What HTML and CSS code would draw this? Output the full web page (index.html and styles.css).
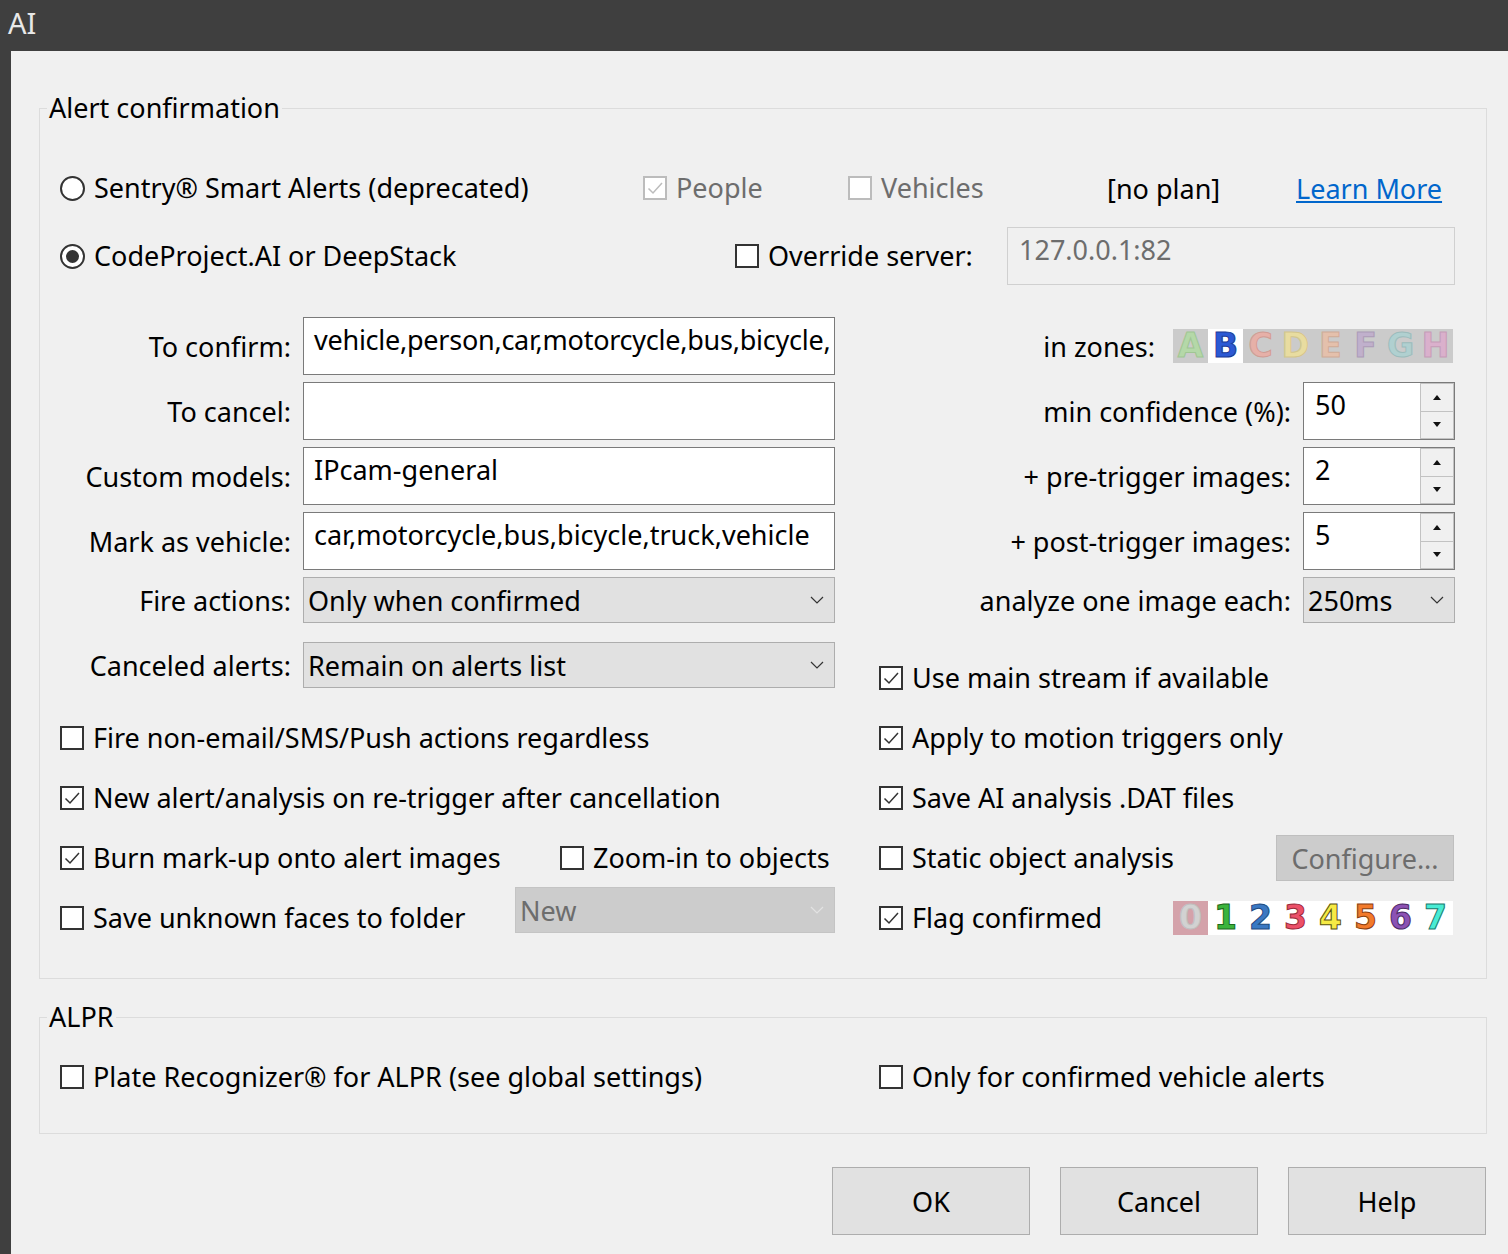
FILE: index.html
```html
<!DOCTYPE html>
<html>
<head>
<meta charset="utf-8">
<title>AI</title>
<link rel="stylesheet" href="styles.css">
</head>
<body>
<div class="titlebar">AI</div>
<div class="client">
  <fieldset class="group g1">
    <legend>Alert confirmation</legend>
    <div class="r1">
      <label class="opt w-sentry"><span class="rb"></span>Sentry® Smart Alerts (deprecated)</label>
      <label class="opt dis w-people"><span class="cb on dis"><svg viewBox="0 0 20 20"><path d="M3.5 10.5 8 15 17 5"/></svg></span>People</label>
      <label class="opt dis w-veh"><span class="cb dis"></span>Vehicles</label>
      <span class="w-plan">[no plan]</span>
      <a class="link" href="#">Learn More</a>
    </div>
    <div class="r2">
      <label class="opt w-cp"><span class="rb on"><span class="dot"></span></span>CodeProject.AI or DeepStack</label>
      <label class="opt w-ovr"><span class="cb"></span>Override server:</label>
      <div class="server">127.0.0.1:82</div>
    </div>

    <div class="row h58 r3">
      <span class="lab">To confirm:</span>
      <div class="fld tb tight">vehicle,person,car,motorcycle,bus,bicycle,</div>
      <div class="rspan zonesline">
        <span>in zones:</span>
        <div class="zones">
          <span class="z za">A</span><span class="z zb">B</span><span class="z zc">C</span><span class="z zd">D</span><span class="z ze">E</span><span class="z zf">F</span><span class="z zg">G</span><span class="z zh">H</span>
        </div>
      </div>
    </div>
    <div class="row h58 r4">
      <span class="lab">To cancel:</span>
      <div class="fld tb"></div>
      <span class="rlab">min confidence (%):</span>
      <div class="rfld spin"><span class="val">50</span><span class="btns"><span class="sb"><i class="up"></i></span><span class="sb"><i class="dn"></i></span></span></div>
    </div>
    <div class="row h58 r4">
      <span class="lab">Custom models:</span>
      <div class="fld tb">IPcam-general</div>
      <span class="rlab">+ pre-trigger images:</span>
      <div class="rfld spin"><span class="val">2</span><span class="btns"><span class="sb"><i class="up"></i></span><span class="sb"><i class="dn"></i></span></span></div>
    </div>
    <div class="row h58 r4">
      <span class="lab">Mark as vehicle:</span>
      <div class="fld tb">car,motorcycle,bus,bicycle,truck,vehicle</div>
      <span class="rlab">+ post-trigger images:</span>
      <div class="rfld spin"><span class="val">5</span><span class="btns"><span class="sb"><i class="up"></i></span><span class="sb"><i class="dn"></i></span></span></div>
    </div>
    <div class="row h46 r4">
      <span class="lab">Fire actions:</span>
      <div class="fld cmb"><span>Only when confirmed</span><svg class="chev" viewBox="0 0 14 8"><path d="M1 1 7 7 13 1"/></svg></div>
      <span class="rlab">analyze one image each:</span>
      <div class="rfld cmb"><span>250ms</span><svg class="chev" viewBox="0 0 14 8"><path d="M1 1 7 7 13 1"/></svg></div>
    </div>
    <div class="row h46 r8">
      <span class="lab">Canceled alerts:</span>
      <div class="fld cmb"><span>Remain on alerts list</span><svg class="chev" viewBox="0 0 14 8"><path d="M1 1 7 7 13 1"/></svg></div>
      <label class="opt rspan low"><span class="cb on"><svg viewBox="0 0 20 20"><path d="M3.5 10.5 8 15 17 5"/></svg></span>Use main stream if available</label>
    </div>

    <div class="row h46 r9">
      <label class="opt lspan"><span class="cb"></span>Fire non-email/SMS/Push actions regardless</label>
      <label class="opt rspan"><span class="cb on"><svg viewBox="0 0 20 20"><path d="M3.5 10.5 8 15 17 5"/></svg></span>Apply to motion triggers only</label>
    </div>
    <div class="row h46 r10">
      <label class="opt lspan"><span class="cb on"><svg viewBox="0 0 20 20"><path d="M3.5 10.5 8 15 17 5"/></svg></span>New alert/analysis on re-trigger after cancellation</label>
      <label class="opt rspan"><span class="cb on"><svg viewBox="0 0 20 20"><path d="M3.5 10.5 8 15 17 5"/></svg></span>Save AI analysis .DAT files</label>
    </div>
    <div class="row h46 r10">
      <label class="opt c1"><span class="cb on"><svg viewBox="0 0 20 20"><path d="M3.5 10.5 8 15 17 5"/></svg></span>Burn mark-up onto alert images</label>
      <label class="opt zoomin"><span class="cb"></span>Zoom-in to objects</label>
      <div class="rspan between">
        <label class="opt"><span class="cb"></span>Static object analysis</label>
        <span class="btn-dis">Configure...</span>
      </div>
    </div>
    <div class="row h46 r10">
      <label class="opt c1"><span class="cb"></span>Save unknown faces to folder</label>
      <div class="cmb dis newcmb"><span>New</span><svg class="chev" viewBox="0 0 14 8"><path d="M1 1 7 7 13 1"/></svg></div>
      <div class="rspan between">
        <label class="opt"><span class="cb on"><svg viewBox="0 0 20 20"><path d="M3.5 10.5 8 15 17 5"/></svg></span>Flag confirmed</label>
        <div class="nums">
          <span class="n n0">0</span><span class="n n1">1</span><span class="n n2">2</span><span class="n n3">3</span><span class="n n4">4</span><span class="n n5">5</span><span class="n n6">6</span><span class="n n7">7</span>
        </div>
      </div>
    </div>
  </fieldset>

  <fieldset class="group g2">
    <legend>ALPR</legend>
    <div class="row h46">
      <label class="opt lspan"><span class="cb"></span>Plate Recognizer® for ALPR (see global settings)</label>
      <label class="opt rspan"><span class="cb"></span>Only for confirmed vehicle alerts</label>
    </div>
  </fieldset>

  <div class="buttons">
    <span class="btn">OK</span>
    <span class="btn">Cancel</span>
    <span class="btn">Help</span>
  </div>
</div>
</body>
</html>
```

FILE: styles.css
```css
* { box-sizing: border-box; }

body {
  margin: 0;
  background: #3f3f3f;
  font-family: "Noto Sans", "Open Sans", sans-serif;
  font-size: 27px;
  color: #000;
}

.titlebar {
  height: 51px;
  padding-left: 8px;
  color: #e8e8e8;
  font-size: 29px;
  line-height: 46px;
}

.client {
  margin-left: 11px;
  height: 1203px;
  background: #f0f0f0;
  padding: 39px 21px 0 28px;
}

.group {
  margin: 0;
  min-width: 0;
  border: 1px solid #dcdcdc;
  padding: 0 31px 37px 20px;
}

.group legend {
  padding: 0 2px;
  margin-left: -13px;
  height: 36px;
  line-height: 36px;
}

.g2 {
  margin-top: 20px;
  padding-bottom: 33px;
}
.g2 .row { margin-top: 19px; }

/* generic option (checkbox / radio + label) */
.opt {
  display: flex;
  align-items: center;
  gap: 9px;
  height: 36px;
  line-height: 36px;
  white-space: nowrap;
}
.opt.dis { color: #6d6d6d; }

.cb {
  flex: none;
  width: 24px;
  height: 24px;
  border: 2px solid #333;
  background: #fff;
  display: inline-flex;
  align-items: center;
  justify-content: center;
}
.cb svg { display: none; width: 20px; height: 20px; }
.cb.on svg { display: block; }
.cb svg path { fill: none; stroke: #333; stroke-width: 1.5; }
.cb.dis { border-color: #bcbcbc; }
.cb.dis svg path { stroke: #bcbcbc; }

.rb {
  flex: none;
  width: 25px;
  height: 25px;
  border: 2px solid #333;
  border-radius: 50%;
  background: #fff;
  display: inline-flex;
  align-items: center;
  justify-content: center;
}
.rb .dot {
  width: 13px;
  height: 13px;
  border-radius: 50%;
  background: #333;
}

/* first two rows */
.r1 {
  display: flex;
  align-items: center;
  height: 50px;
  margin-top: 37px;
}
.w-sentry { width: 583px; }
.w-people { width: 205px; }
.w-veh { width: 259px; }
.w-plan { width: 189px; }
.link { color: #0066cc; text-decoration: underline; }

.r2 {
  display: flex;
  align-items: center;
  height: 58px;
  margin-top: 14px;
}
.w-cp { width: 675px; }
.w-ovr { width: 272px; }
.server {
  flex: 1;
  height: 58px;
  border: 1px solid #d0d0d0;
  background: #f0f0f0;
  color: #6d6d6d;
  padding: 4px 11px 0;
  line-height: 36px;
}

/* grid rows */
.row {
  display: grid;
  grid-template-columns: 231px 12px 532px 44px 412px 12px 152px;
  align-items: center;
}
.h58 { height: 58px; }
.h46 { height: 46px; }
.r3 { margin-top: 32px; }
.r4 { margin-top: 7px; }
.r8 { margin-top: 19px; }
.r9 { margin-top: 27px; }
.r10 { margin-top: 14px; }

.lab { grid-column: 1; text-align: right; white-space: nowrap; }
.fld { grid-column: 3; }
.rlab { grid-column: 5; text-align: right; white-space: nowrap; }
.rfld { grid-column: 7; }
.lspan { grid-column: 1 / 5; }
.rspan { grid-column: 5 / 8; }
.c1 { grid-column: 1 / 3; }

.low { align-self: end; margin-bottom: -8px; }

.zoomin { grid-column: 3; justify-self: start; margin-left: 257px; }

.between {
  display: flex;
  align-items: center;
  justify-content: space-between;
}

.tb {
  height: 58px;
  background: #fff;
  border: 1px solid #7a7a7a;
  padding: 4px 0 0 10px;
  line-height: 36px;
  white-space: nowrap;
  overflow: hidden;
}
.tb.tight { letter-spacing: -0.25px; }

.cmb {
  height: 46px;
  background: #e1e1e1;
  border: 1px solid #adadad;
  display: flex;
  align-items: center;
  justify-content: space-between;
  padding: 0 10px 0 4px;
  white-space: nowrap;
}
.chev { width: 14px; height: 8px; }
.chev path { fill: none; stroke: #333; stroke-width: 1.2; }
.cmb.dis {
  background: #cccccc;
  border-color: #c4c4c4;
  color: #6d6d6d;
}
.cmb.dis .chev path { stroke: #e2e2e2; }
.newcmb {
  grid-column: 3;
  justify-self: end;
  align-self: start;
  width: 320px;
  margin-top: -8px;
  padding-left: 4px;
}

.spin {
  display: flex;
  height: 58px;
  border: 1px solid #7a7a7a;
  background: #fff;
}
.spin .val {
  flex: 1;
  padding: 4px 11px 0;
  line-height: 36px;
}
.spin .btns {
  width: 34px;
  display: flex;
  flex-direction: column;
}
.spin .sb {
  flex: 1;
  background: #f0f0f0;
  border: 1px solid #c2c2c2;
  display: flex;
  align-items: center;
  justify-content: center;
}
.spin .sb + .sb { border-top: 0; }
.up, .dn {
  width: 0;
  height: 0;
  border-left: 4px solid transparent;
  border-right: 4px solid transparent;
}
.up { border-bottom: 5px solid #111; }
.dn { border-top: 5px solid #111; }

/* zones */
.zonesline {
  display: flex;
  justify-content: flex-end;
  align-items: center;
  gap: 18px;
}
.zones {
  display: flex;
  height: 34px;
  margin-right: 2px;
  background: #cbcbcb;
}
.z {
  width: 35px;
  height: 34px;
  text-align: center;
  font-family: "DejaVu Sans", sans-serif;
  font-weight: 700;
  font-size: 33px;
  line-height: 34px;
  -webkit-text-stroke: 1px;
}
.za { color: #b4d8a8; -webkit-text-stroke-color: #a0c694; }
.zb { background: #fff; color: #2c59d4; -webkit-text-stroke-color: #1b3b96; }
.zc { color: #e6b0a8; -webkit-text-stroke-color: #d09c94; }
.zd { color: #e8dca0; -webkit-text-stroke-color: #d4c68c; }
.ze { color: #e4c0ac; -webkit-text-stroke-color: #d0ac98; }
.zf { color: #c0b0cc; -webkit-text-stroke-color: #ac9cb8; }
.zg { color: #b0d0d0; -webkit-text-stroke-color: #9cbcbc; }
.zh { color: #dab0cc; -webkit-text-stroke-color: #c69cb8; }

/* flag numbers */
.nums {
  display: flex;
  height: 34px;
  margin-right: 2px;
  background: #fff;
}
.n {
  width: 35px;
  height: 34px;
  text-align: center;
  font-family: "DejaVu Sans", sans-serif;
  font-weight: 700;
  font-size: 33px;
  line-height: 34px;
  -webkit-text-stroke: 1px #333;
}
.n0 { background: #d4a2aa; color: #d2d2d2; -webkit-text-stroke-color: #c0c0c0; }
.n1 { color: #3cb43c; -webkit-text-stroke-color: #1d6a1d; }
.n2 { color: #3a78c2; -webkit-text-stroke-color: #1f4a80; }
.n3 { color: #ec5068; -webkit-text-stroke-color: #9a2a3a; }
.n4 { color: #f6ea44; -webkit-text-stroke-color: #5a5410; }
.n5 { color: #f27a2c; -webkit-text-stroke-color: #8a4010; }
.n6 { color: #8c52b4; -webkit-text-stroke-color: #4a2a66; }
.n7 { color: #48ecd4; -webkit-text-stroke-color: #1a7a6c; }

.btn-dis {
  width: 178px;
  height: 46px;
  margin-right: 1px;
  background: #cccccc;
  border: 1px solid #bfbfbf;
  color: #6d6d6d;
  display: flex;
  align-items: center;
  justify-content: center;
}

/* dialog buttons */
.buttons {
  display: flex;
  justify-content: flex-end;
  gap: 30px;
  margin-top: 33px;
  padding-right: 1px;
}
.btn {
  width: 198px;
  height: 68px;
  background: #e1e1e1;
  border: 1px solid #adadad;
  display: flex;
  align-items: center;
  justify-content: center;
}
```
